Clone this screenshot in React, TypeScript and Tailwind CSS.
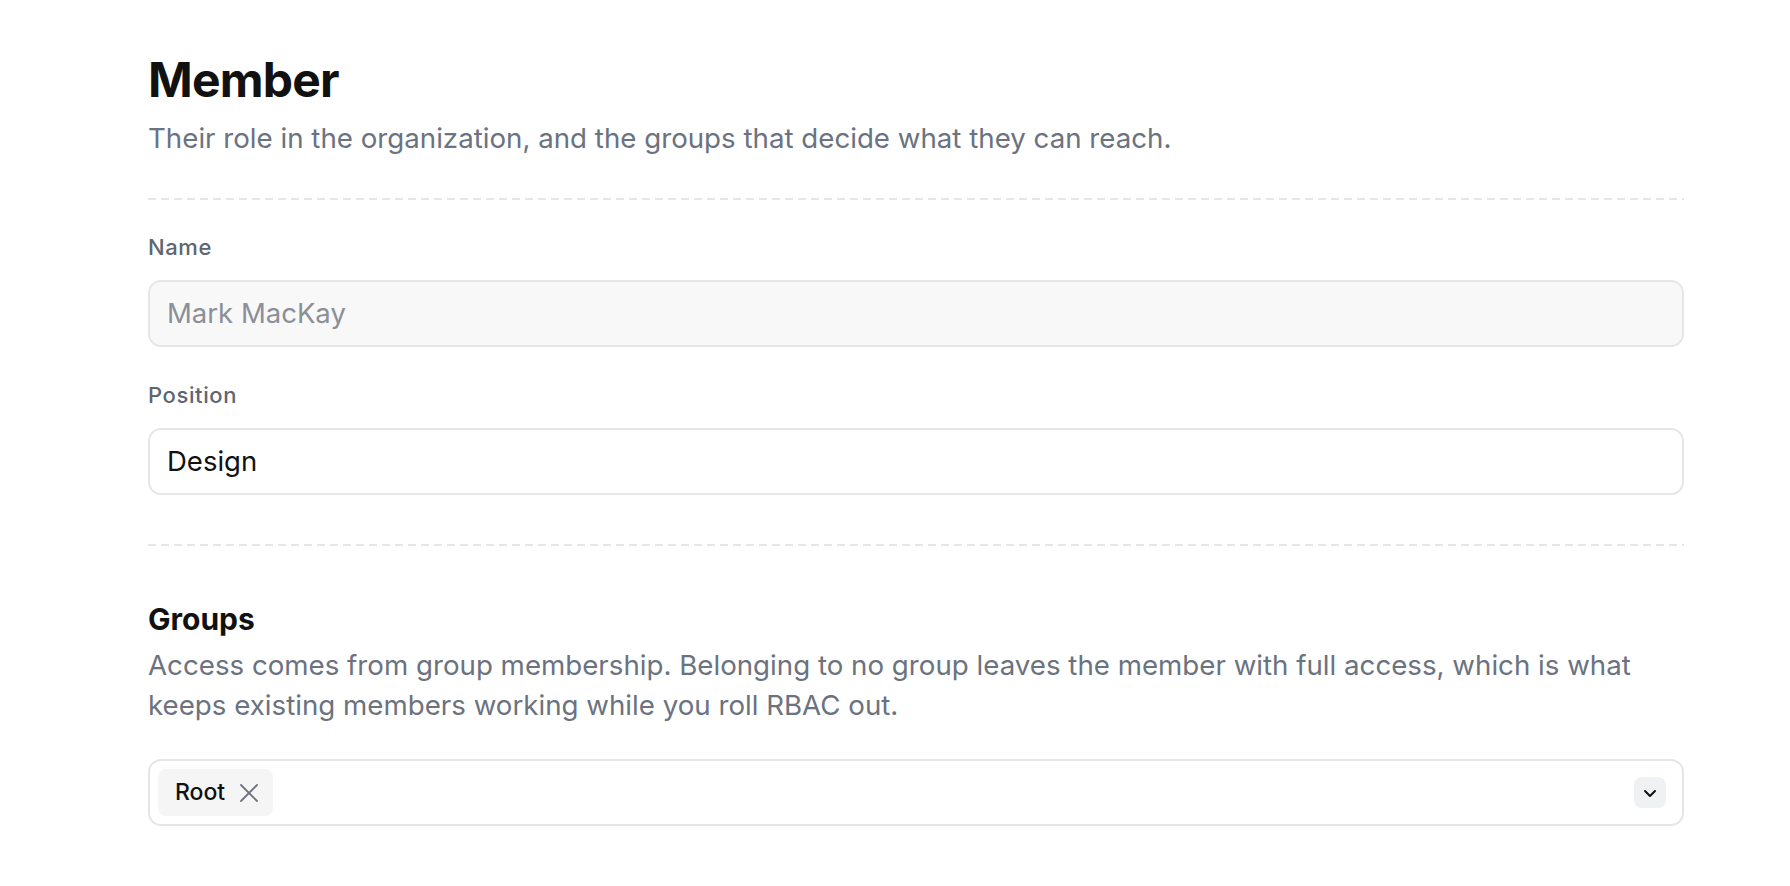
import React from "react";

const font = { fontFamily: "Inter, 'Noto Sans', sans-serif" };

function Dashed() {
  return (
    <div className="h-[2px] w-full bg-[repeating-linear-gradient(to_right,#e6e6ea_0px,#e6e6ea_8px,transparent_8px,transparent_13px)]" />
  );
}

function Field({ label, value, disabled }: { label: string; value: string; disabled?: boolean }) {
  return (
    <div className="flex flex-col">
      <label className="text-[22px] leading-[28px] font-medium tracking-[0.6px] text-[#5f6571]">{label}</label>
      <div
        className={
          disabled
            ? "mt-[19px] h-[67px] rounded-[13px] border-2 border-[#e6e6ea] bg-[#f8f8f8] flex items-center px-[17px] text-[27.5px] text-[#8a8f98]"
            : "mt-[19px] h-[67px] rounded-[13px] border-2 border-[#e6e6ea] bg-white flex items-center px-[17px] text-[27.5px] text-[#111111]"
        }
      >
        {value}
      </div>
    </div>
  );
}

export default function App() {
  return (
    <div className="min-h-screen bg-white [font-optical-sizing:none]" style={font}>
      <div className="ml-[148px] w-[1536px] pt-[56px] pb-[60px] flex flex-col">
        <h1 className="text-[48px] leading-[48px] font-bold tracking-[-0.8px] text-[#111111]">Member</h1>
        <p className="mt-[16px] text-[27.7px] leading-[36px] text-[#6b7280]">
          Their role in the organization, and the groups that decide what they can reach.
        </p>
        <div className="mt-[42px]">
          <Dashed />
        </div>
        <div className="mt-[33px] flex flex-col gap-[34px]">
          <Field label="Name" value="Mark MacKay" disabled />
          <Field label="Position" value="Design" />
        </div>
        <div className="mt-[49px]">
          <Dashed />
        </div>
        <h2 className="mt-[55px] text-[30px] leading-[36px] font-bold text-[#111111]">Groups</h2>
        <p className="mt-[8px] text-[27.7px] leading-[40px] text-[#6b7280]">
          Access comes from group membership. Belonging to no group leaves the member with full access, which is what
          keeps existing members working while you roll RBAC out.
        </p>
        <div className="mt-[34px] h-[67px] rounded-[13px] border-2 border-[#e6e6ea] bg-white flex items-center pl-[8px] pr-[16px]">
          <div className="h-[47px] rounded-[8px] bg-[#f5f5f5] flex items-center pl-[17px] pr-[14px] gap-[14px]">
            <span className="text-[23px] text-[#111111] font-medium">Root</span>
            <svg width="20" height="20" viewBox="0 0 20 20" fill="none" stroke="#6b7280" strokeWidth="1.8" strokeLinecap="round">
              <path d="M2 2 L18 18" />
              <path d="M18 2 L2 18" />
            </svg>
          </div>
          <div className="ml-auto h-[31px] w-[32px] rounded-[8px] bg-[#f0f1f3] flex items-center justify-center">
            <svg width="16" height="16" viewBox="0 0 16 16" fill="none" stroke="#111111" strokeWidth="2" strokeLinecap="round" strokeLinejoin="round">
              <path d="M3 6 L8 11 L13 6" />
            </svg>
          </div>
        </div>
      </div>
    </div>
  );
}
